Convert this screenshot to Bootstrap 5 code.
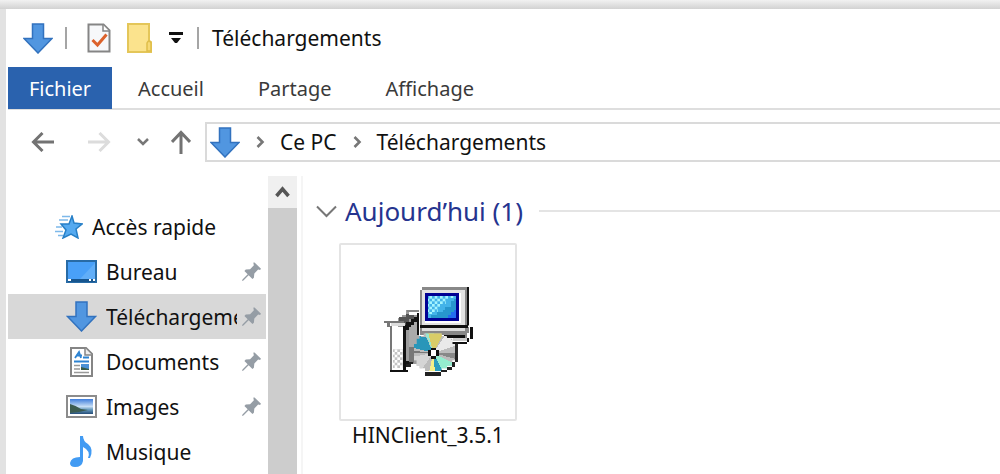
<!DOCTYPE html>
<html lang="fr">
<head>
<meta charset="utf-8">
<meta name="viewport" content="width=device-width, initial-scale=1">
<title>Téléchargements</title>
<link href="https://cdn.jsdelivr.net/npm/bootstrap@5.3.0/dist/css/bootstrap.min.css" rel="stylesheet">
<style>
  body { font-family: "Noto Sans", "Open Sans", sans-serif; font-size: 21px; line-height: 28px; color: #111; background: #e2e2e2; }
  .desk { padding: 9px 0 0 6px; background: linear-gradient(#f1f1f1, #d2d2d2 9px, transparent 9px); min-height: 100vh; }
  .explorer { background: #fff; min-height: calc(100vh - 9px); padding-left: 2px; }
  svg { display: block; flex: none; }
  button, a { color: inherit; text-decoration: none; }
  .tool { border: 0; background: none; padding: 0; }
  .titlebar { height: 58px; padding-left: 15px; }
  .sep { width: 2px; height: 22px; background: #a5a5a5; }
  .quick { gap: 16px; margin: 0 14px 0 12px; }
  .quick .sep { margin-right: 4px; }
  .caption { margin: 0 0 0 13px; font-size: 21px; font-weight: 400; line-height: 28px; }
  .ribbon { height: 43px; border-bottom: 2px solid #dedede; font-size: 20px; color: #3a3a3a; }
  .ribbon a { height: 42px; line-height: 44px; }
  .tab-file { width: 104px; background: #2a62ae; color: #fff; text-align: center; margin-right: 26px; }
  .ribbon .tab-item { margin-right: 54px; }
  .navrow { padding: 12px 0 14px 23px; }
  .history { gap: 32px; }
  .levels { gap: 22px; margin: 0 14px 0 26px; }
  .address { height: 40px; border: 2px solid #dadada; border-right: 0; padding-left: 3px; }
  .crumb { margin: 0 15px 0 16px; }
  .side { width: 260px; padding-top: 28px; }
  .side a { height: 45px; margin-right: 2px; padding: 0 5px 0 58px; }
  .side a.top { padding-left: 47px; }
  .side a.active { background: #d8d8d8; }
  .side .label { overflow: hidden; white-space: nowrap; flex: 1 1 0; margin: 0 5px 0 9px; }
  .scroller { width: 29px; background: #cdcdcd; }
  .scroller button { height: 32px; width: 29px; background: #f0f0f0; }
  .files { border-left: 2px solid #f5f5f5; margin-left: 4px; padding: 20px 0 0 13px; }
  .group { font-size: 26px; line-height: 30px; color: #25348f; font-weight: 400; margin: 0; }
  .rule { height: 2px; background: #e4e4e4; margin-left: 16px; }
  .file { width: 178px; margin: 17px 0 0 23px; }
  .thumb { height: 178px; border: 2px solid #e4e4e4; border-radius: 2px; }
</style>
</head>
<body>
<svg width="0" height="0" class="position-absolute" aria-hidden="true">
  <symbol id="down" viewBox="0 0 30 31"><path d="M9.500 1h11v14.500h8.500L15 30 1 15.500h8.500z" fill="#5196e0" stroke="#3272be" stroke-width="1.500"/></symbol>
  <symbol id="pin" viewBox="0 0 20 20"><path d="M12.500 0L20 7l-1 1.500-2-.5-4 4-.5 4.500L11 18l-4-4-5.500 5.500L0 20l.5-1.500L6 13 2.500 9.500 4 8l4.500-.5 4-4L12 1.500z" fill="#959da5"/></symbol>
  <symbol id="next" viewBox="0 0 9 12"><path d="M1.500 1l5 5-5 5" fill="none" stroke="#777" stroke-width="2.600"/></symbol>
</svg>
<div class="desk">
<main class="explorer">
  <header class="titlebar d-flex align-items-center">
    <svg width="30" height="31"><use href="#down"/></svg>
    <div class="quick d-flex align-items-center">
      <span class="sep"></span>
      <button class="tool" aria-label="Propriétés"><svg width="24" height="30" viewBox="0 0 24 30"><path d="M1.500 1.500h15l6 6v21h-21z" fill="#f7f8fa" stroke="#858585" stroke-width="2"/><path d="M16 2v6h6" fill="#fff" stroke="#858585" stroke-width="1.500"/><path d="M5.500 17l5 5L19.500 11.500" fill="none" stroke="#dc622c" stroke-width="3"/></svg></button>
      <button class="tool" aria-label="Nouveau dossier"><svg width="26" height="30" viewBox="0 0 26 30"><path d="M1 1h21v17l2 1v10H1z" fill="#fbe38d" stroke="#e4c659" stroke-width="2"/><path d="M20 28V20q2-4 4 0v8z" fill="#f6d976" stroke="#dfbe4a" stroke-width="1.500"/></svg></button>
      <button class="tool" aria-label="Personnaliser"><svg width="14" height="12" viewBox="0 0 14 12"><path d="M0 0h14v3H0zM2 6h10l-4 5H6z" fill="#111"/></svg></button>
    </div>
    <span class="sep"></span>
    <h1 class="caption">Téléchargements</h1>
  </header>
  <nav class="ribbon d-flex" aria-label="Ruban">
    <a href="#" class="tab-file">Fichier</a>
    <a href="#" class="tab-item">Accueil</a>
    <a href="#" class="tab-item">Partage</a>
    <a href="#" class="tab-item">Affichage</a>
  </nav>
  <div class="navrow d-flex align-items-center">
    <div class="history d-flex">
      <button class="tool" aria-label="Précédent"><svg width="24" height="20" viewBox="0 0 24 20"><path d="M23 10H3M11.500 1L2.500 10l9 9" fill="none" stroke="#737373" stroke-width="3"/></svg></button>
      <button class="tool" aria-label="Suivant"><svg width="24" height="20" viewBox="0 0 24 20"><path d="M1 10h20M12.500 1l9 9-9 9" fill="none" stroke="#dcdcdc" stroke-width="3"/></svg></button>
    </div>
    <div class="levels d-flex align-items-center">
      <button class="tool" aria-label="Emplacements récents"><svg width="12" height="10" viewBox="0 0 12 10"><path d="M1 2l5 5 5-5" fill="none" stroke="#777" stroke-width="2.500"/></svg></button>
      <button class="tool" aria-label="Dossier parent"><svg width="20" height="24" viewBox="0 0 20 24"><path d="M10 24V3M1 12l9-9.500 9 9.500" fill="none" stroke="#737373" stroke-width="3"/></svg></button>
    </div>
    <div class="address d-flex align-items-center flex-grow-1">
      <svg width="30" height="31"><use href="#down"/></svg>
      <svg class="crumb" width="9" height="12"><use href="#next"/></svg>
      <a href="#">Ce PC</a>
      <svg class="crumb" width="9" height="12"><use href="#next"/></svg>
      <a href="#">Téléchargements</a>
    </div>
  </div>
  <div class="d-flex">
    <nav class="side flex-shrink-0" aria-label="Dossiers">
      <a href="#" class="top d-flex align-items-center"><svg width="28" height="24" viewBox="0 0 28 24"><path d="M17 1l2 7 8 1-6 5 2 9-7-4-8 4 3-8-5-6h8z" fill="#55aaf0" stroke="#267fc7" stroke-width="1.500"/><path d="M7 1.500h8M4 5h9M1 12h6M0 16.500h8M3 20.500h5" stroke="#7db9ea" stroke-width="1.500"/></svg><span class="label">Accès rapide</span></a>
      <a href="#" class="d-flex align-items-center"><svg width="31" height="23" viewBox="0 0 31 23"><path d="M1 1h29v21H1z" fill="#49a0f8" stroke="#286ba6" stroke-width="2"/><path d="M14 19L29 3v16z" fill="#61aef8"/><path d="M2 19h27v3H2z" fill="#17558e"/><path d="M2 19h3v2H2zM23 19h2v2h-2zM27 19h2v2h-2z" fill="#fff"/></svg><span class="label">Bureau</span><svg width="19" height="19"><use href="#pin"/></svg></a>
      <a href="#" class="active d-flex align-items-center"><svg width="31" height="31"><use href="#down"/></svg><span class="label">Téléchargements</span><svg width="19" height="19"><use href="#pin"/></svg></a>
      <a href="#" class="d-flex align-items-center"><svg width="31" height="30" viewBox="0 0 31 30"><path d="M5 1h15l6 6v22H5z" fill="#fff" stroke="#858585" stroke-width="2"/><path d="M19 1v7h7" fill="#eee" stroke="#858585" stroke-width="1.500"/><path d="M9 11l4-6 2 6M10 8.500h6M17 10.500h6M8 14.500h15" fill="none" stroke="#2d83d2" stroke-width="1.800"/><path d="M8 18.500h6M8 22h6M8 25.500h15" stroke="#999" stroke-width="1.500"/><path d="M15 17h8v6h-8z" fill="#4a91d6"/><path d="M15 20l8 2v1h-8z" fill="#365b48"/></svg><span class="label">Documents</span><svg width="19" height="19"><use href="#pin"/></svg></a>
      <a href="#" class="d-flex align-items-center"><svg width="31" height="23" viewBox="0 0 31 23"><defs><linearGradient id="sky" x2="0" y2="1"><stop stop-color="#3e7ddc"/><stop offset=".5" stop-color="#c7def5"/><stop offset=".7" stop-color="#6a9dc0"/><stop offset="1" stop-color="#244c78"/></linearGradient></defs><path d="M1 1h29v21H1z" fill="#fff" stroke="#8c8c8c" stroke-width="2"/><path d="M4 4h23v15H4z" fill="url(#sky)"/><path d="M4 9q7 2 11 5l7 1-9 2-9 1z" fill="#3c5c50"/></svg><span class="label">Images</span><svg width="19" height="19"><use href="#pin"/></svg></a>
      <a href="#" class="d-flex align-items-center"><svg width="31" height="31" viewBox="0 0 31 31"><path d="M14 0h3q0 5 5 8 6 5 2 14h-2q3-7-5-11v14q-1 6-8 6-5 0-5-4 1-6 10-6z" fill="#429bf3"/></svg><span class="label">Musique</span></a>
    </nav>
    <div class="scroller"><button class="tool d-flex align-items-center justify-content-center" aria-label="Défiler vers le haut"><svg width="15" height="12" viewBox="0 0 15 12"><path d="M1.500 10l6-7 6 7" fill="none" stroke="#555" stroke-width="3.500"/></svg></button></div>
    <section class="files flex-grow-1">
      <div class="d-flex align-items-center">
        <svg width="21" height="13" viewBox="0 0 21 13"><path d="M1 1.500l9.500 9.500L20 1.500" fill="none" stroke="#777" stroke-width="2"/></svg>
        <h2 class="group ms-2">Aujourd’hui (1)</h2>
        <span class="rule flex-grow-1"></span>
      </div>
      <figure class="file text-center">
        <div class="thumb d-flex align-items-center justify-content-center">
          <svg width="105" height="105" viewBox="0 0 315 315" shape-rendering="crispEdges">
            <defs><pattern id="dots" width="16" height="16" patternUnits="userSpaceOnUse"><path d="M0 0h8v8H0zM8 8h8v8H8z" fill="#c4c4c4"/></pattern>
            <pattern id="glow" width="16" height="16" patternUnits="userSpaceOnUse"><path d="M0 0h8v8H0zM8 8h8v8H8z" fill="#a5f4ff"/></pattern>
            <clipPath id="disc"><path d="M143 160h54v8h16v8h16v16h8v49h-8v16h-16v8h-16v8h-50v-8h-16v-8h-9v-16h-8v-49h8v-16h8v-8h13z"/></clipPath></defs>
            <path d="M66 113h12v-8h12V89h40v164H90v16H66z" fill="#9c9c9c"/>
            <path d="M70 110h20v-8h25v16h-16v20H66z" fill="#555"/>
            <path d="M92 89h38v8H92z" fill="#888"/><path d="M98 97h32v8H98z" fill="#fff"/>
            <path d="M98 142h8v-8h8v-16h16v102h-16v24H98z" fill="#aaa"/>
            <path d="M82 134h8v-8h16v-8h8v-8h16v8h-8v8h-8v8h-8v8h-8v8h-8v94h8v8H82z" fill="#151515"/>
            <path d="M25 122h60v8H25zM33 130h10v10H33z" fill="#777"/><path d="M45 130h41v8H45z" fill="#ddd"/>
            <path d="M41 138h8v138h-8z" fill="#777"/><path d="M49 140h33v130H49z" fill="#fff"/><path d="M50 208h32v56H50z" fill="url(#dots)"/><path d="M41 269h55v8H41z" fill="#111"/><path d="M82 138h8v134h-8z" fill="#111"/>
            <path d="M98 200h16v48H98z" fill="#777"/><path d="M90 253h16v8H90zM98 245h12v8H98z" fill="#222"/>
            <path d="M122 98h8v66h-8z" fill="#111"/>
            <path d="M131 142h149v16h-8v24h-42v-18h-99z" fill="#888"/><path d="M137 142h130v10H137z" fill="#ddd"/>
            <path d="M203 166h64v8h-64z" fill="#111"/><path d="M230 174h44v9h-44z" fill="#ccc"/><path d="M229 185h44v7h-44zM272 174h8v12h-8zM281 140h11v36h-11z" fill="#111"/>
            <path d="M139 22h136v8h5v108h-5v6H131V30h8z" fill="#888"/><path d="M139 30h127v106H139z" fill="#e3e3e3"/><path d="M147 38h107v90H147z" fill="#fff"/><path d="M266 30h8v104h-8z" fill="#888"/><path d="M274 22h6v114h-6zM131 136h144v8H131z" fill="#111"/>
            <path d="M147 38h103v84H147z" fill="#000094"/><path d="M157 47h84v66h-84z" fill="#43b3e9"/><path d="M157 47h76v8h-16v8h-8v8h-16v16h-8v8h-12v8h-16z" fill="url(#glow)"/><path d="M241 56v57h-75v-8h17v-8h17v-8h8v-9h17V64h8v-8z" fill="#2796ce"/><path d="M241 89v24h-24v-8h8v-8h8v-8z" fill="#236bf0"/>
            <g clip-path="url(#disc)"><path d="M105 155h135v125H105z" fill="#bcbcbc"/><path d="M172 219l-25-60h28z" fill="#99e8cf"/><path d="M172 219l-15-60h45z" fill="#d8cc68"/><path d="M172 219l-68-18 22-33 25 5z" fill="#2996b9"/><path d="M172 219l35-52 40 27z" fill="#e9e9e9"/><path d="M172 219h75v20z" fill="#888"/><path d="M172 219H102v-8z" fill="#777"/><path d="M172 219l-13 58h22z" fill="#f4ef87"/><path d="M172 219l5 58h28z" fill="#2c9dbe"/><path d="M172 219l30 58 35-25z" fill="#94edcf"/><path d="M172 219l-65 12 8 35 20 5z" fill="#d5d5d5"/></g>
            <path d="M147 277h49v10h-49zM196 269h17v8h-17zM213 261h16v8h-16zM229 245h8v16h-8zM237 192h8v53h-8z" fill="#222"/>
            <path d="M164 203h17v8h8v17h-8v8h-17v-8h-8v-17h8z" fill="#111"/><path d="M164 211h16v16h-16z" fill="#fff"/>
          </svg>
        </div>
        <figcaption>HINClient_3.5.1</figcaption>
      </figure>
    </section>
  </div>
</main>
</div>
<script src="https://cdn.jsdelivr.net/npm/bootstrap@5.3.0/dist/js/bootstrap.bundle.min.js"></script>
</body>
</html>
